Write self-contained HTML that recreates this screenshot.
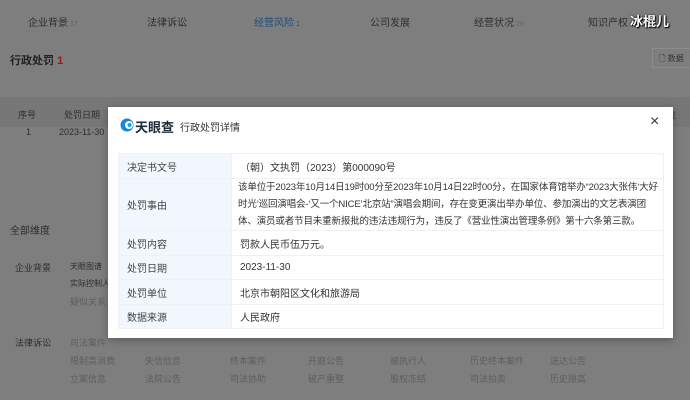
<!DOCTYPE html>
<html style="background:#7e7e7e"><head><meta charset="utf-8"><style>
*{margin:0;padding:0;box-sizing:border-box}
html,body{background:#7e7e7e}
body{width:690px;height:400px;overflow:hidden;font-family:"Liberation Sans","Noto Sans CJK SC",sans-serif;position:relative;color:#333}
.a{position:absolute;white-space:nowrap}
.bg{color:#2e2e2e;font-size:10px}
.dim{color:#5e5e5e;font-size:9px}
.modal{position:absolute;left:108px;top:107px;width:565px;height:231px;background:#fff;box-shadow:0 2px 8px rgba(0,0,0,.3)}
table{position:absolute;left:10px;top:46px;width:546px;border-collapse:collapse;font-size:10px;table-layout:fixed}
td{border:1px solid #eef1f5;padding:0 8px;color:#333;vertical-align:middle;overflow:hidden}
td.l{width:113px;background:#f1f7fd;color:#444}
td.v{line-height:17px;font-size:9.5px;letter-spacing:-0.15px;padding:0 4px 0 6px}
</style></head><body>
<svg style="position:absolute;left:0;top:0" width="690" height="400"><rect x="0" y="0" width="690" height="400" fill="#7e7e7e"/><rect x="0" y="97" width="690" height="30" fill="#777"/></svg>
<div class="a bg" style="left:28px;top:14px;font-size:10px">企业背景<span style="color:#666;font-size:7px"> 17</span></div>
<div class="a bg" style="left:147px;top:14px">法律诉讼</div>
<div class="a" style="left:254px;top:14px;font-size:10px;color:#1d4f86">经营风险<span style="font-size:7px"> 1</span></div>
<div class="a bg" style="left:370px;top:14px">公司发展</div>
<div class="a bg" style="left:474px;top:14px">经营状况<span style="color:#666;font-size:7px"> 28</span></div>
<div class="a bg" style="left:588px;top:14px">知识产权</div>
<div class="a" style="left:630px;top:11px;font-size:13px;font-weight:bold;color:#fff;text-shadow:0 0 2px #000,1px 1px 1px #000">冰棍儿</div>
<div class="a" style="left:10px;top:52px;font-size:11px;font-weight:bold;color:#222">行政处罚 <span style="color:#a01818">1</span></div>
<div class="a" style="left:652px;top:48px;width:40px;height:20px;border:1px solid #8c8c8c;font-size:8px;color:#333;padding:4px 0 0 6px">🗋 数据</div>
<div class="a bg" style="left:18px;top:108px;font-size:9px">序号</div>
<div class="a bg" style="left:64px;top:108px;font-size:9px">处罚日期</div>
<div class="a bg" style="left:166px;top:108px;font-size:9px">决定文书号</div>
<div class="a bg" style="left:294px;top:108px;font-size:9px">处罚事由/违法行为类型</div>
<div class="a bg" style="left:482px;top:108px;font-size:9px">处罚结果/内容</div>
<div class="a bg" style="left:640px;top:108px;font-size:9px">处罚单位</div>
<div class="a bg" style="left:26px;top:127px;font-size:9px">1</div>
<div class="a bg" style="left:59px;top:127px;font-size:9px">2023-11-30</div>
<div class="a bg" style="left:10px;top:222px;font-size:10px">全部维度</div>
<div class="a bg" style="left:15px;top:261px;font-size:9px">企业背景</div>
<div class="a bg" style="left:70px;top:261px;font-size:8px">天眼图谱</div>
<div class="a bg" style="left:70px;top:278px;font-size:8px">实际控制人</div>
<div class="a dim" style="left:70px;top:295px">疑似关系</div>
<div class="a bg" style="left:15px;top:336px;font-size:9px">法律诉讼</div>
<div class="a dim" style="left:70px;top:336px">司法案件</div>
<div class="a dim" style="left:70px;top:354px">限制高消费</div>
<div class="a dim" style="left:145px;top:354px">失信信息</div>
<div class="a dim" style="left:230px;top:354px">终本案件</div>
<div class="a dim" style="left:308px;top:354px">开庭公告</div>
<div class="a dim" style="left:390px;top:354px">被执行人</div>
<div class="a dim" style="left:470px;top:354px">历史终本案件</div>
<div class="a dim" style="left:550px;top:354px">送达公告</div>
<div class="a dim" style="left:70px;top:372px">立案信息</div>
<div class="a dim" style="left:145px;top:372px">法院公告</div>
<div class="a dim" style="left:230px;top:372px">司法协助</div>
<div class="a dim" style="left:308px;top:372px">破产重整</div>
<div class="a dim" style="left:390px;top:372px">股权冻结</div>
<div class="a dim" style="left:470px;top:372px">司法拍卖</div>
<div class="a dim" style="left:550px;top:372px">历史限高</div>
<div class="modal">
 <svg class="a" style="left:12px;top:11px" width="14" height="14" viewBox="0 0 14 14"><circle cx="7" cy="7" r="6.5" fill="#1a86d6"/><circle cx="9" cy="7" r="4" fill="#fff"/><circle cx="9.5" cy="7" r="2" fill="#17a2e8"/></svg>
 <div class="a" style="left:27px;top:10px;font-size:13px;font-weight:bold;color:#1c2a3a">天眼查</div>
 <div class="a" style="left:72px;top:12px;font-size:10px;color:#333">行政处罚详情</div>
 <div class="a" style="left:542px;top:6px;font-size:16px;color:#333">×</div>
 <table>
  <tr style="height:25px"><td class="l">决定书文号</td><td>（朝）文执罚（2023）第000090号</td></tr>
  <tr style="height:52px"><td class="l">处罚事由</td><td class="v">该单位于2023年10月14日19时00分至2023年10月14日22时00分，在国家体育馆举办“2023大张伟‘大好时光’巡回演唱会-‘又一个NICE’北京站”演唱会期间，存在变更演出举办单位、参加演出的文艺表演团体、演员或者节目未重新报批的违法违规行为，违反了《营业性演出管理条例》第十六条第三款。</td></tr>
  <tr style="height:25px"><td class="l">处罚内容</td><td>罚款人民币伍万元。</td></tr>
  <tr style="height:24px"><td class="l">处罚日期</td><td>2023-11-30</td></tr>
  <tr style="height:25px"><td class="l">处罚单位</td><td>北京市朝阳区文化和旅游局</td></tr>
  <tr style="height:24px"><td class="l">数据来源</td><td>人民政府</td></tr>
 </table>
</div>
</body></html>
